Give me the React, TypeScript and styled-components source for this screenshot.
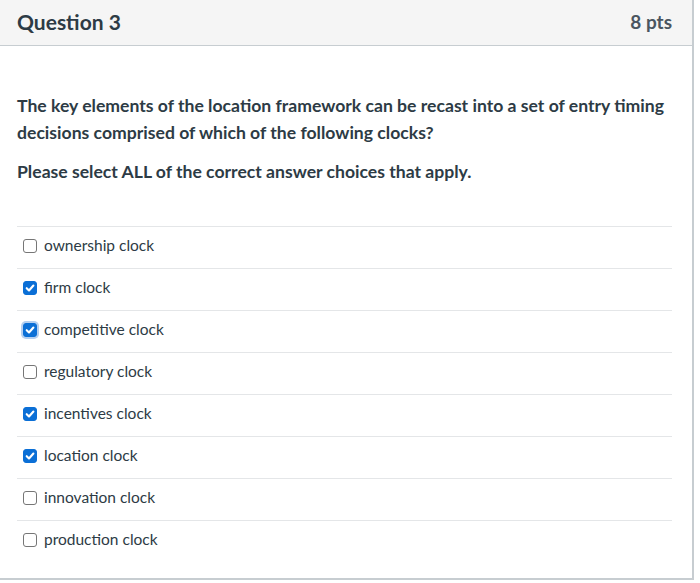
import React, { useState } from "react";
import styled, { createGlobalStyle } from "styled-components";

const GlobalStyle = createGlobalStyle`
  html, body {
    margin: 0;
    padding: 0;
    background: #ffffff;
  }
  body {
    font-family: Lato, "Noto Sans", "Liberation Sans", sans-serif;
    color: #2d3b45;
  }
`;

const Card = styled.div`
  width: 694px;
  height: 580px;
  box-sizing: border-box;
  border-right: 2px solid #c7cdd1;
  border-bottom: 2px solid #c7cdd1;
  background: #fff;
  display: flex;
  flex-direction: column;
`;

const Header = styled.div`
  height: 46px;
  box-sizing: border-box;
  background: #f5f5f5;
  border-bottom: 1px solid #c7cdd1;
  display: flex;
  align-items: center;
  justify-content: space-between;
  padding: 0 20px 3px 17px;
`;

const Title = styled.h2`
  margin: 0;
  font-size: 21px;
  font-weight: 700;
  color: #2d3b45;
`;

const Points = styled.span`
  font-size: 19px;
  font-weight: 700;
  color: #4a5560;
`;

const Body = styled.div`
  padding: 46px 20px 0 17px;
`;

const Prompt = styled.p`
  margin: 0;
  font-size: 17.6px;
  font-weight: 700;
  line-height: 27px;
  color: #2d3b45;
`;

const Instruction = styled(Prompt)`
  margin-top: 12px;
`;

const Answers = styled.ul`
  list-style: none;
  margin: 41px 0 0;
  padding: 0;
  border-top: 1px solid #e4e6e8;
`;

const Answer = styled.li`
  height: 42px;
  border-bottom: 1px solid #e4e6e8;
  display: flex;
  align-items: center;
  gap: 7px;
  padding: 0 0 6px 6px;
  box-sizing: border-box;
  cursor: pointer;
  user-select: none;

  &:last-child {
    border-bottom: none;
  }
`;

const Box = styled.span<{ $checked: boolean; $focused?: boolean }>`
  width: 14px;
  height: 14px;
  margin-top: 2px;
  box-sizing: border-box;
  border-radius: 3px;
  border: 1px solid ${(p) => (p.$checked ? "#0b6fd6" : "#767676")};
  background: ${(p) => (p.$checked ? "#0b6fd6" : "#fff")};
  display: flex;
  align-items: center;
  justify-content: center;
  box-shadow: ${(p) => (p.$focused ? "0 0 0 2px #b4cff0" : "none")};
`;

const Label = styled.span`
  font-size: 15.5px;
  color: #2d3b45;
  line-height: 20px;
`;

const choices = [
  { text: "ownership clock", checked: false },
  { text: "firm clock", checked: true },
  { text: "competitive clock", checked: true, focused: true },
  { text: "regulatory clock", checked: false },
  { text: "incentives clock", checked: true },
  { text: "location clock", checked: true },
  { text: "innovation clock", checked: false },
  { text: "production clock", checked: false },
];

function Check() {
  return (
    <svg width="10" height="10" viewBox="0 0 10 10">
      <path d="M1.7 5.2 L4 7.5 L8.4 2.5" fill="none" stroke="#fff" strokeWidth="2.1" strokeLinecap="round" strokeLinejoin="round" />
    </svg>
  );
}

export default function App() {
  const [state, setState] = useState(choices.map((c) => c.checked));
  const toggle = (i: number) => setState(state.map((v, j) => (j === i ? !v : v)));

  return (
    <>
      <GlobalStyle />
      <Card>
        <Header>
          <Title>Question 3</Title>
          <Points>8 pts</Points>
        </Header>
        <Body>
          <Prompt>
            The key elements of the location framework can be recast into a set of entry timing
            decisions comprised of which of the following clocks?
          </Prompt>
          <Instruction>Please select ALL of the correct answer choices that apply.</Instruction>
          <Answers>
            {choices.map((c, i) => (
              <Answer key={c.text} onClick={() => toggle(i)}>
                <Box $checked={state[i]} $focused={c.focused}>
                  {state[i] && <Check />}
                </Box>
                <Label>{c.text}</Label>
              </Answer>
            ))}
          </Answers>
        </Body>
      </Card>
    </>
  );
}
